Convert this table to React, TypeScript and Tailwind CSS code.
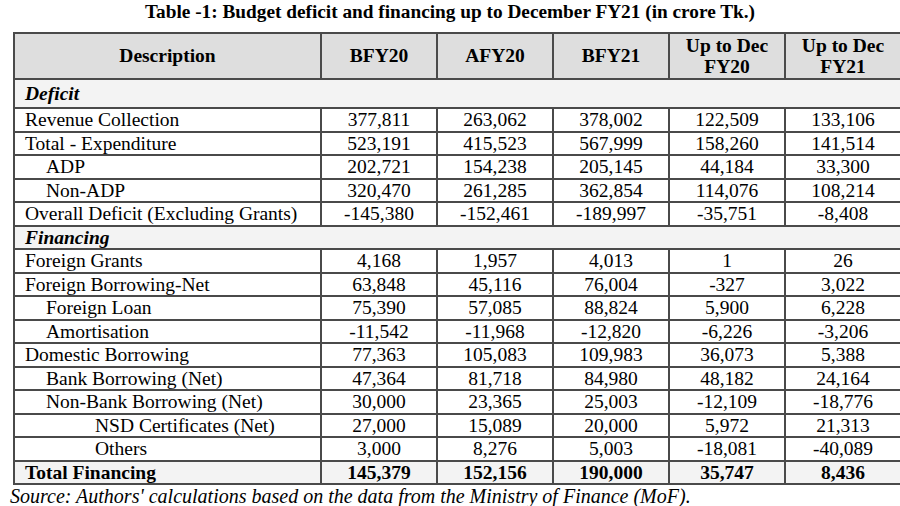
const COLS = ["BFY20", "AFY20", "BFY21"];

type Row =
  | { kind: "section"; label: string; h?: string }
  | { kind: "data"; label: string; indent: 0 | 1 | 2; values: string[] }
  | { kind: "total"; label: string; values: string[] };

const ROWS: Row[] = [
  { kind: "section", label: "Deficit", h: "h-[29px]" },
  { kind: "data", label: "Revenue Collection", indent: 0, values: ["377,811", "263,062", "378,002", "122,509", "133,106"] },
  { kind: "data", label: "Total - Expenditure", indent: 0, values: ["523,191", "415,523", "567,999", "158,260", "141,514"] },
  { kind: "data", label: "ADP", indent: 1, values: ["202,721", "154,238", "205,145", "44,184", "33,300"] },
  { kind: "data", label: "Non-ADP", indent: 1, values: ["320,470", "261,285", "362,854", "114,076", "108,214"] },
  { kind: "data", label: "Overall Deficit (Excluding Grants)", indent: 0, values: ["-145,380", "-152,461", "-189,997", "-35,751", "-8,408"] },
  { kind: "section", label: "Financing" },
  { kind: "data", label: "Foreign Grants", indent: 0, values: ["4,168", "1,957", "4,013", "1", "26"] },
  { kind: "data", label: "Foreign Borrowing-Net", indent: 0, values: ["63,848", "45,116", "76,004", "-327", "3,022"] },
  { kind: "data", label: "Foreign Loan", indent: 1, values: ["75,390", "57,085", "88,824", "5,900", "6,228"] },
  { kind: "data", label: "Amortisation", indent: 1, values: ["-11,542", "-11,968", "-12,820", "-6,226", "-3,206"] },
  { kind: "data", label: "Domestic Borrowing", indent: 0, values: ["77,363", "105,083", "109,983", "36,073", "5,388"] },
  { kind: "data", label: "Bank Borrowing (Net)", indent: 1, values: ["47,364", "81,718", "84,980", "48,182", "24,164"] },
  { kind: "data", label: "Non-Bank Borrowing (Net)", indent: 1, values: ["30,000", "23,365", "25,003", "-12,109", "-18,776"] },
  { kind: "data", label: "NSD Certificates (Net)", indent: 2, values: ["27,000", "15,089", "20,000", "5,972", "21,313"] },
  { kind: "data", label: "Others", indent: 2, values: ["3,000", "8,276", "5,003", "-18,081", "-40,089"] },
  { kind: "total", label: "Total Financing", values: ["145,379", "152,156", "190,000", "35,747", "8,436"] },
];

const cell = "border-2 border-[#4a4a4a] p-0";
const indentCls = ["pl-[10px]", "pl-[31px]", "pl-[80px]"];

export default function App() {
  return (
    <div className="w-[900px] h-[506px] bg-white text-black [font-family:'Liberation_Serif',serif]">
      {/* Title */}
      <h1 className="h-[32px] text-center text-[19.3px] font-bold leading-[24px]">
        Table -1: Budget deficit and financing up to December FY21 (in crore Tk.)
      </h1>

      <div className="pl-[13px]">
        <table className="border-collapse table-fixed w-[887px] text-[19.5px]">
          <colgroup>
            <col className="w-[307px]" />
            <col className="w-[116px]" />
            <col className="w-[116px]" />
            <col className="w-[116px]" />
            <col className="w-[116px]" />
            <col className="w-[116px]" />
          </colgroup>
          <thead>
            <tr className="h-[46px] bg-[#dedede] font-bold">
              <th className={`${cell} leading-none`}>Description</th>
              {COLS.map((c) => (
                <th key={c} className={`${cell} leading-none`}>{c}</th>
              ))}
              <th className={`${cell} leading-[21px]`}>Up to Dec<br />FY20</th>
              <th className={`${cell} leading-[21px]`}>Up to Dec<br />FY21</th>
            </tr>
          </thead>
          <tbody className="leading-none">
            {ROWS.map((r) => {
              if (r.kind === "section") {
                return (
                  <tr key={r.label} className={`${r.h ?? "h-[23.5px]"} bg-[#f3f3f3]`}>
                    <td colSpan={6} className={`${cell} pl-[10px] text-[19.5px] font-bold italic`}>
                      {r.label}
                    </td>
                  </tr>
                );
              }
              const total = r.kind === "total";
              return (
                <tr key={r.label} className={`h-[23.5px] ${total ? "bg-[#f3f3f3] font-bold" : ""}`}>
                  <td className={`${cell} ${total ? "pl-[10px]" : indentCls[r.indent]}`}>{r.label}</td>
                  {r.values.map((v, i) => (
                    <td key={i} className={`${cell} text-center`}>{v}</td>
                  ))}
                </tr>
              );
            })}
          </tbody>
        </table>
      </div>

      <p className="pl-[10px] text-[20px] italic leading-[22px]">
        Source: Authors' calculations based on the data from the Ministry of Finance (MoF).
      </p>
    </div>
  );
}
